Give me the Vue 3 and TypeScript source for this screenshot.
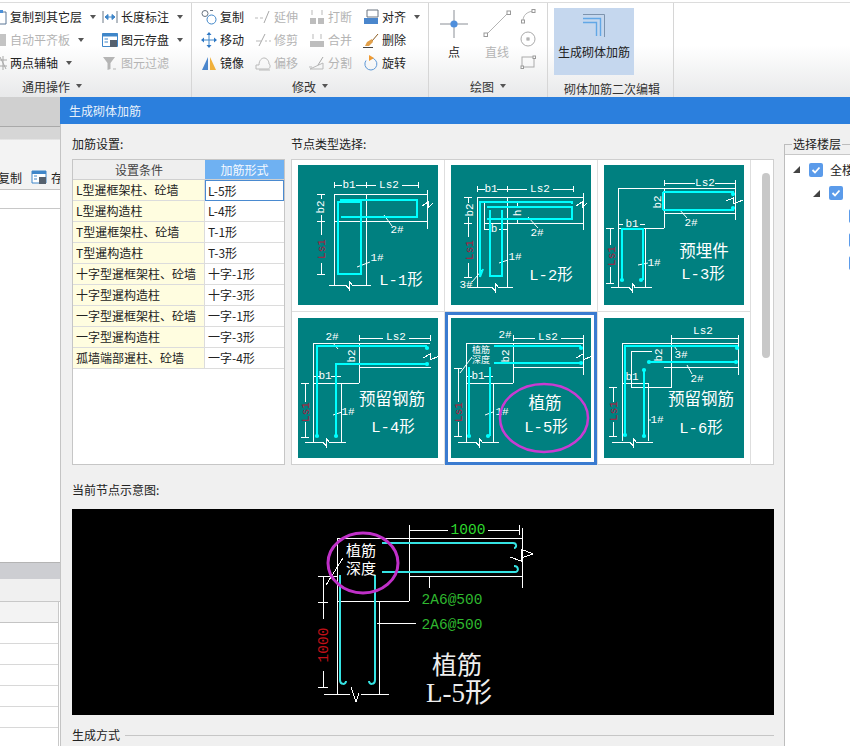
<template>
  <div class="page">
    <header class="ribbon">
      <section class="group g-common">
        <div class="tools">
          <div v-for="t in commonTools" :key="t.label" class="tool" :class="{ off: t.off }">
            <svg class="ico" viewBox="0 0 16 16"><path v-for="(p, i) in t.icon" :key="i" :d="p.d" :fill="p.f || 'none'" :stroke="p.s || 'none'" /></svg>
            <span>{{ t.label }}</span>
            <i v-if="t.caret" class="caret"></i>
          </div>
        </div>
        <footer class="group-label">通用操作<i class="caret"></i></footer>
      </section>

      <section class="group g-modify">
        <div class="tools">
          <div v-for="t in modifyTools" :key="t.label" class="tool" :class="{ off: t.off }">
            <svg class="ico" viewBox="0 0 16 16"><path v-for="(p, i) in t.icon" :key="i" :d="p.d" :fill="p.f || 'none'" :stroke="p.s || 'none'" /></svg>
            <span>{{ t.label }}</span>
            <i v-if="t.caret" class="caret"></i>
          </div>
        </div>
        <footer class="group-label">修改<i class="caret"></i></footer>
      </section>

      <section class="group g-draw">
        <div class="draw-tools">
          <div class="big-tool point">
            <svg width="30" height="30" viewBox="0 0 30 30">
              <path d="M15 1V29M1 15H29" stroke="#8a8f96" fill="none" />
              <circle cx="15" cy="15" r="3.6" fill="#4f8fdc" />
            </svg>
            <span>点</span>
          </div>
          <div class="big-tool line off">
            <svg width="30" height="30" viewBox="0 0 30 30">
              <path d="M4 26L26 4" stroke="#b4b4b4" fill="none" />
              <rect x="2" y="24" width="3.5" height="3.5" fill="#fff" stroke="#999" />
              <rect x="25" y="2" width="3.5" height="3.5" fill="#fff" stroke="#999" />
            </svg>
            <span>直线</span>
          </div>
          <div class="mini-tools">
            <svg width="16" height="16" viewBox="0 0 16 16"><path d="M3 13C3 7 7 4 13 3" stroke="#b4b4b4" fill="none" /><rect x="1.5" y="12" width="3" height="3" fill="#fff" stroke="#999" /><rect x="12" y="1.5" width="3" height="3" fill="#fff" stroke="#999" /></svg>
            <svg width="16" height="16" viewBox="0 0 16 16"><circle cx="8" cy="8" r="7" stroke="#aaa" fill="#fff" /><rect x="7" y="7" width="2" height="2" fill="none" stroke="#999" /></svg>
            <svg width="16" height="16" viewBox="0 0 16 16"><rect x="2" y="3" width="12" height="10" stroke="#aaa" fill="none" /><rect x="1" y="12" width="2.5" height="2.5" fill="#fff" stroke="#999" /><rect x="13" y="2" width="2.5" height="2.5" fill="#fff" stroke="#999" /></svg>
          </div>
        </div>
        <footer class="group-label">绘图<i class="caret"></i></footer>
      </section>

      <section class="group g-rebar">
        <div class="rebar-tile">
          <svg width="24" height="24" viewBox="0 0 24 24">
            <path d="M1 1.5H22.5V24" stroke="#7d93ad" fill="none" />
            <path d="M1 5.5H18.5V23" stroke="#62a7e6" stroke-width="1.4" fill="none" />
            <path d="M1 9.5H14.5V23" stroke="#62a7e6" stroke-width="1.4" fill="none" />
          </svg>
          <span>生成砌体加筋</span>
        </div>
        <footer class="group-label">砌体加筋二次编辑</footer>
      </section>
    </header>

    <div class="backdrop">
      <div class="back-top"></div>
      <div class="back-bar">
        <div class="back-tools">
          <span class="back-copy">复制</span>
          <svg class="ico" viewBox="0 0 16 16">
            <path d="M1 2H15V14H1Z" fill="#fff" stroke="#3f86c9" />
            <path d="M1 2H15V5H1Z" fill="#3f86c9" />
            <path d="M8 8H15V15H8Z" fill="#56616e" />
            <path d="M3 7H6M3 10H6" stroke="#3f86c9" />
          </svg>
          <span>存</span>
        </div>
      </div>
      <div class="back-blank"></div>
      <div class="back-white"></div>
      <div class="back-band"></div>
      <div class="back-strip"></div>
      <div class="back-grid">
        <div class="back-head"></div>
        <div v-for="n in 6" :key="n" class="back-row"></div>
      </div>
    </div>

    <div class="dialog">
      <div class="dialog-title">生成砌体加筋</div>
      <div class="dialog-body">
        <div class="main-col">
          <div class="top-row">
            <div class="settings">
              <div class="caption">加筋设置:</div>
              <div class="table">
                <div class="th">设置条件</div>
                <div class="th th-active">加筋形式</div>
                <template v-for="(r, i) in rows" :key="r.name">
                  <div class="td td-name">{{ r.name }}</div>
                  <div class="td td-form" :class="{ current: i === 0 }">{{ r.form }}</div>
                </template>
              </div>
            </div>

            <div class="nodes">
              <div class="caption">节点类型选择:</div>
              <div class="node-panel">
                <div class="node-grid">
                  <div v-for="(n, i) in nodes" :key="n.id" class="node-cell" :class="{ selected: n.id === 'L-5', first: i < 3 }">
                    <svg class="node-img" width="140" height="140" viewBox="0 0 140 140">
                      <path :d="n.white" class="wire" />
                      <path :d="n.leaders" class="leader" />
                      <path :d="n.cyan" class="bar" />
                      <circle v-for="(d, k) in n.dots" :key="k" :cx="d[0]" :cy="d[1]" r="2.1" fill="#00ffff" />
                      <text
                        v-for="(l, k) in n.labels"
                        :key="k"
                        :x="l.x"
                        :y="l.y"
                        :class="['lbl', l.kind || 'dim']"
                        :transform="l.rot ? `rotate(-90 ${l.x} ${l.y})` : undefined"
                      >{{ l.t }}</text>
                      <ellipse v-if="n.id === 'L-5'" cx="93" cy="100" rx="44" ry="34" class="mark" />
                    </svg>
                  </div>
                </div>
                <div class="scroll-thumb"></div>
              </div>
            </div>
          </div>

          <div class="caption preview-cap">当前节点示意图:</div>
          <svg class="preview" width="702" height="206" viewBox="0 0 702 206">
            <path class="p-wire" d="M337 16V26M337 21H376M416 21H447M447 16V26M265 29H450M265 29V185M337 18V92M265 92H337M337 67H450M450 19V79M307 92V185M252 185H278M289 185H317M357 67V79M305 114H344M438 48L449 52L449 40L461 45L449 49M279 178L284 193L287 184" />
            <path class="p-wire" d="M251 67V110M251 162V178M246 67H265M246 93H256M246 178H256M271 49L254 76" />
            <path class="p-bar" d="M310 34H441C445 34 445 39 442 39M310 63H443C447 63 447 57 442 57M268 66V171C268 176 274 176 274 172M303 66V171C303 176 297 176 297 172" />
            <text x="396" y="21" class="p-num lime">1000</text>
            <text x="380" y="91" class="p-code green">2A6@500</text>
            <text x="380" y="116" class="p-code green">2A6@500</text>
            <text x="252" y="136" class="p-num red" transform="rotate(-90 252 136)">1000</text>
            <text x="289" y="40" class="p-note">植筋</text>
            <text x="289" y="58" class="p-note">深度</text>
            <text x="385" y="156" class="p-title">植筋</text>
            <text x="387" y="184" class="p-title p-code-name">L-5形</text>
            <ellipse cx="291" cy="54" rx="35" ry="30" class="p-mark" />
          </svg>
          <div class="gen-row"><span>生成方式</span><i></i></div>
        </div>

        <fieldset class="floors">
          <legend>选择楼层</legend>
          <div class="tree">
            <div class="tree-row">
              <svg class="arrow" width="7" height="7" viewBox="0 0 7 7"><path d="M7 0V7H0Z" fill="#444" /></svg>
              <span class="check"><svg width="14" height="14" viewBox="0 0 14 14"><path d="M3.5 7L6 9.5L10.5 4.5" stroke="#fff" stroke-width="1.8" fill="none" /></svg></span>
              <span class="tree-text">全楼</span>
            </div>
            <div class="tree-row lvl2">
              <svg class="arrow" width="7" height="7" viewBox="0 0 7 7"><path d="M7 0V7H0Z" fill="#444" /></svg>
              <span class="check"><svg width="14" height="14" viewBox="0 0 14 14"><path d="M3.5 7L6 9.5L10.5 4.5" stroke="#fff" stroke-width="1.8" fill="none" /></svg></span>
            </div>
            <div v-for="n in 3" :key="n" class="tree-row lvl3"><span class="check"></span></div>
          </div>
        </fieldset>
      </div>
    </div>
  </div>
</template>

<script setup lang="ts">
interface Shape {
  d: string
  s?: string
  f?: string
}

interface Tool {
  label: string
  icon: Shape[]
  off?: boolean
  caret?: boolean
}

interface Label {
  x: number
  y: number
  t: string
  rot?: boolean
  kind?: string
}

interface NodeImg {
  id: string
  white: string
  leaders: string
  cyan: string
  dots: number[][]
  labels: Label[]
}

const grey = '#b9b9b9'

const commonTools: Tool[] = [
  { label: '复制到其它层', caret: true, icon: [{ d: 'M4 3H15V15H4Z', s: '#5a7696', f: '#fff' }, { d: 'M2 1H12V4H2Z', f: '#4a8fd8' }] },
  { label: '自动平齐板', off: true, caret: true, icon: [{ d: 'M9 2H15V14H9Z', f: '#c4c4c4' }] },
  { label: '两点辅轴', caret: true, icon: [{ d: 'M12 1V15M8 5H16M8 11H16M9 2L15 14', s: '#a8a8a8' }] },
  { label: '长度标注', caret: true, icon: [{ d: 'M1 2V14M15 2V14', s: '#6d7a88' }, { d: 'M3 8H13M3 8L6 5.5V10.5ZM13 8L10 5.5V10.5Z', s: '#3f86c9', f: '#3f86c9' }] },
  { label: '图元存盘', caret: true, icon: [{ d: 'M0.5 1.5H15.5V14.5H0.5Z', f: '#fff', s: '#3f86c9' }, { d: 'M0.5 1.5H15.5V4.5H0.5Z', f: '#3f86c9' }, { d: 'M8 8H15V15H8Z', f: '#56616e' }, { d: 'M2.5 7H6M2.5 10H6', s: '#3f86c9' }] },
  { label: '图元过滤', off: true, icon: [{ d: 'M1 2H13L8.5 8V14L5.5 15V8Z', f: '#b5b5b5' }, { d: 'M11 14H14', s: '#b5b5b5' }] }
]

const modifyTools: Tool[] = [
  { label: '复制', icon: [{ d: 'M7 4.5A3 3 0 1 1 1 4.5A3 3 0 1 1 7 4.5', s: '#6a7480' }, { d: 'M15 10.5A4.5 4.5 0 1 1 6 10.5A4.5 4.5 0 1 1 15 10.5', s: '#3f86c9' }, { d: 'M9 1.5H12', s: '#6a7480' }] },
  { label: '移动', icon: [{ d: 'M8 2V14M2 8H14', s: '#3f86c9' }, { d: 'M8 0L10.5 3H5.5ZM8 16L5.5 13H10.5ZM0 8L3 5.5V10.5ZM16 8L13 10.5V5.5Z', f: '#2f78c4' }] },
  { label: '镜像', icon: [{ d: 'M7 2V15H1Z', f: '#4a86cc' }, { d: 'M9 2V15H15Z', f: '#f0b03a' }] },
  { label: '延伸', off: true, icon: [{ d: 'M0 9H3M5 9H8', s: grey }, { d: 'M14 2L9 14', s: '#a8a8a8' }] },
  { label: '修剪', off: true, icon: [{ d: 'M1 9H6M10 9H12M14 9H16', s: grey }, { d: 'M10 2L4 14', s: '#a8a8a8' }] },
  { label: '偏移', off: true, icon: [{ d: 'M1 14V10H4C4 5 7 3 9 3C12 3 14 6 14 9C16 10 15 14 13 14Z', s: grey }, { d: 'M4 15H15', s: grey }] },
  { label: '打断', off: true, icon: [{ d: 'M1 9H7V15H1ZM9 9H15V15H9Z', f: '#bdbdbd' }, { d: 'M3 1V6M13 1V6', s: grey }] },
  { label: '合并', off: true, icon: [{ d: 'M1 9H15V15H1Z', f: '#bdbdbd' }, { d: 'M4 2V7M12 2V7', s: grey }] },
  { label: '分割', off: true, icon: [{ d: 'M1 14H14V8L1 14Z', s: grey }, { d: 'M9 10L14 2', s: '#a8a8a8' }, { d: 'M0 12H3', s: grey }] },
  { label: '对齐', caret: true, icon: [{ d: 'M4 1H15V8H4Z', s: '#6a7480', f: '#fff' }, { d: 'M1 9H15V15H1Z', f: '#4a86cc' }] },
  { label: '删除', icon: [{ d: 'M9 9L15 2', s: '#8a5a20' }, { d: 'M4 10L9 7L10 10L6 14H2Z', f: '#e2a04a' }, { d: 'M0 15.5H10', s: '#444' }] },
  { label: '旋转', icon: [{ d: 'M8 3A6 6 0 1 1 3 5.5', s: '#5d97d6' }, { d: 'M6 0L11 3L6 6Z', f: '#ef9a32' }] }
]

const rows = [
  { name: 'L型暹框架柱、砼墙', form: 'L-5形' },
  { name: 'L型暹构造柱', form: 'L-4形' },
  { name: 'T型暹框架柱、砼墙', form: 'T-1形' },
  { name: 'T型暹构造柱', form: 'T-3形' },
  { name: '十字型暹框架柱、砼墙', form: '十字-1形' },
  { name: '十字型暹构造柱', form: '十字-3形' },
  { name: '一字型暹框架柱、砼墙', form: '一字-1形' },
  { name: '一字型暹构造柱', form: '一字-3形' },
  { name: '孤墙端部暹柱、砼墙', form: '一字-4形' }
]

const nodes: NodeImg[] = [
  {
    id: 'L-1',
    white: 'M36 17V23M36 20H44M58 20H78M104 20H120M120 17V23M68 17V23M36 29H129M36 56H129M36 29V120M68 29V120M129 25V64M31 120H48M54 120H73M48 120L51 124L51 116L54 120M124 41L130 37V43L135 38M23 29V34M23 50V70M23 98V109M19 29H27M19 56H27M19 109H27',
    leaders: 'M86 50L94 61M59 102L72 97',
    cyan: 'M42 35H119V52H43M40 37H63V109H40Z',
    dots: [],
    labels: [
      { x: 51, y: 20, t: 'b1' }, { x: 91, y: 20, t: 'Ls2' },
      { x: 23, y: 42, t: 'b2', rot: true }, { x: 24, y: 84, t: 'Ls1', rot: true, kind: 'red' },
      { x: 99, y: 65, t: '2#' }, { x: 79, y: 93, t: '1#' }, { x: 103, y: 116, t: 'L-1形', kind: 'big' }
    ]
  },
  {
    id: 'L-2',
    white: 'M26 21V27M26 24H34M46 24H76M102 24H122M122 21V27M56 21V27M26 32H132M33 58H132M26 32V122M56 32V122M33 37V64M33 37H56M132 28V65M17 122H41M47 122H62M41 122L44 126L44 118L47 122M125 41L131 37V43L136 38M17 32V38M17 52V72M17 98V112M13 32H21M13 58H21M13 112H21M33 64H38M48 64H56M66 37V43M66 53V58M63 37H69M63 58H69',
    leaders: 'M77 52L87 63M48 98L57 95M32 104L21 117',
    cyan: 'M29 112V37H121V39M36 42H121V54H36M39 45V111H51V45M29 112L32 104',
    dots: [],
    labels: [
      { x: 40, y: 24, t: 'b1' }, { x: 89, y: 24, t: 'Ls2' },
      { x: 19, y: 45, t: 'b2', rot: true }, { x: 19, y: 85, t: 'Ls1', rot: true, kind: 'red' },
      { x: 43, y: 64, t: 'b' }, { x: 67, y: 48, t: 'h', rot: true },
      { x: 86, y: 68, t: '2#' }, { x: 64, y: 92, t: '1#' }, { x: 15, y: 120, t: '3#' },
      { x: 100, y: 111, t: 'L-2形', kind: 'big' }
    ]
  },
  {
    id: 'L-3',
    white: 'M60 15V21M60 18H91M111 18H131M131 15V21M14 23H132M14 23V63M14 63H60M60 23V63M60 48H131M131 17V55M14 59H19M36 59H41M14 63V122M41 63V122M6 63V80M6 102V118M2 63H10M2 118H10M7 122H25M30 122H48M25 122L28 126L28 118L31 122M122 36L129 33V39L139 35',
    leaders: 'M75 44L83 53M34 100L44 98',
    cyan: 'M59 27H129V31M59 45H129V42M59 27V45M18 115V64H39V115',
    dots: [[129, 29], [129, 43], [18, 115], [37, 115]],
    labels: [
      { x: 101, y: 18, t: 'Ls2' }, { x: 28, y: 59, t: 'b1' }, { x: 54, y: 37, t: 'b2', rot: true },
      { x: 8, y: 91, t: 'Ls1', rot: true, kind: 'red' }, { x: 87, y: 58, t: '2#' }, { x: 50, y: 98, t: '1#' },
      { x: 100, y: 87, t: '预埋件', kind: 'cn' }, { x: 99, y: 110, t: 'L-3形', kind: 'big' }
    ]
  },
  {
    id: 'L-4',
    white: 'M61 17V23M61 20H85M111 20H132M132 17V23M15 25H132M15 25V124M61 49H133M61 25V65M15 65H61M43 65V124M7 124H25M31 124H48M25 124L28 128L28 120L31 124M15 58H22M33 58H43M7 65V84M7 104V119M3 65H11M3 119H11M125 40L132 36V42L141 38',
    leaders: 'M35 25L40 31M35 97L44 94',
    cyan: 'M19 118V28H129M38 118V46H129',
    dots: [[129, 30], [129, 46], [19, 118], [38, 118]],
    labels: [
      { x: 98, y: 19, t: 'Ls2' }, { x: 34, y: 19, t: '2#' }, { x: 54, y: 38, t: 'b2', rot: true }, { x: 27, y: 58, t: 'b1' },
      { x: 8, y: 94, t: 'Ls1', rot: true, kind: 'red' }, { x: 50, y: 94, t: '1#' },
      { x: 94, y: 82, t: '预留钢筋', kind: 'cn' }, { x: 95, y: 110, t: 'L-4形', kind: 'big' }
    ]
  },
  {
    id: 'L-5',
    white: 'M62 17V23M62 20H84M110 20H132M132 17V23M15 25H132M15 25V124M62 49H132M62 25V65M15 65H62M42 65V124M132 23V57M7 124H25M31 124H48M25 124L28 128L28 120L31 124M15 58H21M33 58H42M7 50V84M7 104V118M3 50H11M3 118H11M125 40L132 36V42L141 38',
    leaders: 'M21 39L9 55M34 97L42 94',
    cyan: 'M18 118V49M39 118V49M43 28H130M43 45H130',
    dots: [[130, 30], [130, 45], [18, 118], [37, 118]],
    labels: [
      { x: 97, y: 19, t: 'Ls2' }, { x: 54, y: 17, t: '2#' }, { x: 55, y: 38, t: 'b2', rot: true }, { x: 27, y: 58, t: 'b1' },
      { x: 30, y: 33, t: '植筋', kind: 'note' }, { x: 30, y: 43, t: '深度', kind: 'note' },
      { x: 8, y: 94, t: 'Ls1', rot: true, kind: 'red' }, { x: 51, y: 94, t: '1#' },
      { x: 94, y: 86, t: '植筋', kind: 'cn' }, { x: 95, y: 110, t: 'L-5形', kind: 'big' }
    ]
  },
  {
    id: 'L-6',
    white: 'M67 17V23M67 20H134M134 17V23M18 25H134M18 25V123M48 33H27V69H67V20M60 49H134M134 20V57M44 65V123M18 65H44M9 69V84M9 104V118M5 69H13M5 118H13M8 124H26M32 124H49M26 124L29 128L29 120L32 124',
    leaders: 'M83 47L88 56M70 28L73 32M44 102L47 102',
    cyan: 'M21 117V28H133V30M45 44H132M40 52V118',
    dots: [[21, 117], [40, 118], [133, 30], [132, 44], [45, 44], [40, 52]],
    labels: [
      { x: 99, y: 13, t: 'Ls2' }, { x: 55, y: 37, t: 'b2', rot: true }, { x: 77, y: 37, t: '3#' }, { x: 93, y: 61, t: '2#' },
      { x: 28, y: 59, t: 'b1' }, { x: 10, y: 93, t: 'Ls1', rot: true, kind: 'red' }, { x: 53, y: 102, t: '1#' },
      { x: 97, y: 82, t: '预留钢筋', kind: 'cn' }, { x: 97, y: 111, t: 'L-6形', kind: 'big' }
    ]
  }
]
</script>

<style>
html,
body {
  margin: 0;
  overflow: hidden;
  background: #fff;
}
</style>

<style scoped>
.page {
  position: relative;
  width: 850px;
  height: 746px;
  overflow: hidden;
  background: #fff;
  font-family: "Noto Sans CJK SC", "Liberation Sans", sans-serif;
  font-size: 12px;
  color: #222;
}

/* ribbon */
.ribbon {
  display: flex;
  height: 94px;
  margin-top: 2px;
  border-top: 1px solid #dcdcdc;
  background: linear-gradient(#fff 0, #fff 45%, #e8e9ea 100%);
  overflow: hidden;
}

.group {
  flex: none;
  position: relative;
  border-right: 1px solid #d6d6d6;
  box-sizing: border-box;
}

.g-common { width: 192px; }
.g-modify { width: 237px; }
.g-draw { width: 119px; }
.g-rebar { width: 126px; }

.tools {
  display: grid;
  grid-auto-flow: column;
  grid-template-rows: repeat(3, 23px);
  margin-top: 2px;
}

.g-common .tools {
  grid-template-columns: 111px auto;
  margin-left: -9px;
}

.g-modify .tools {
  grid-template-columns: 54px 54px 54px auto;
  margin-left: 9px;
}

.tool {
  display: flex;
  align-items: center;
  gap: 3px;
  white-space: nowrap;
}

.ico {
  flex: none;
  width: 16px;
  height: 16px;
}

.off {
  color: #b4b4b4;
}

.caret {
  display: inline-block;
  width: 0;
  height: 0;
  margin-left: 5px;
  border: 3px solid transparent;
  border-top: 4px solid #555;
  border-bottom: 0;
}

.group-label {
  display: flex;
  align-items: center;
  justify-content: center;
  height: 16px;
  margin-top: 4px;
  color: #333;
}

.g-common .group-label {
  justify-content: flex-start;
  padding-left: 22px;
}

.group-label .caret {
  margin-left: 6px;
}

.draw-tools {
  display: flex;
  height: 69px;
  margin-top: 3px;
}

.draw-tools + .group-label {
  margin-top: 3px;
}

.big-tool {
  display: flex;
  flex-direction: column;
  align-items: center;
  padding-top: 3px;
  gap: 5px;
}

.big-tool span {
  line-height: 16px;
}

.point { width: 50px; }
.line { width: 36px; margin-right: 5px; }

.mini-tools {
  display: flex;
  flex-direction: column;
  gap: 7px;
  padding-top: 2px;
}

.rebar-tile {
  display: flex;
  flex-direction: column;
  align-items: center;
  box-sizing: border-box;
  width: 80px;
  height: 67px;
  margin: 5px 0 0 6px;
  padding-top: 5px;
  background: #c5d7ee;
  gap: 7px;
}

.rebar-tile span {
  line-height: 16px;
}

.g-rebar .group-label {
  margin-top: 4px;
  padding-left: 3px;
  transform: translateY(1px);
}

/* window behind the dialog */
.back-top {
  height: 29px;
  background: #d0d0d0;
  border-bottom: 1px solid #a9a9a9;
}

.back-bar {
  height: 63px;
  box-sizing: border-box;
  padding-top: 42px;
  background: linear-gradient(#d6d6d6 0, #d6d6d6 12px, #f3f3f3 13px);
  border-bottom: 1px solid #c4c4c4;
}

.back-tools {
  display: flex;
  align-items: center;
  gap: 4px;
  height: 16px;
  margin-left: -2px;
}

.back-copy {
  margin-right: 5px;
}

.back-blank {
  height: 18px;
  border-bottom: 1px solid #c8c8c8;
}

.back-white {
  height: 353px;
  border-bottom: 1px solid #b4b4b4;
}

.back-band {
  height: 16px;
  background: #cdced2;
}

.back-strip {
  height: 22px;
  background: #f0f0f0;
  border-bottom: 1px solid #c8c8c8;
}

.back-grid {
  width: 58px;
  border-right: 1px solid #c8c8c8;
}

.back-head {
  height: 20px;
  background: #f3f3f3;
  border-bottom: 1px solid #c4c4c4;
}

.back-row {
  height: 20px;
  border-bottom: 1px solid #d8d8d8;
}

/* dialog */
.dialog {
  position: absolute;
  left: 60px;
  top: 97px;
  width: 790px;
  height: 649px;
  background: #f0f0f0;
  overflow: hidden;
}

.dialog-title {
  height: 27px;
  line-height: 27px;
  padding-left: 9px;
  background: #2b7fdd;
  color: #e8f1fb;
}

.dialog-body {
  display: flex;
  height: 622px;
  box-sizing: border-box;
  padding: 12px 0 0 11px;
  border-left: 1px solid #c4c4c4;
}

.main-col {
  flex: none;
  width: 702px;
}

.caption {
  height: 16px;
  line-height: 16px;
}

.top-row {
  display: flex;
  gap: 6px;
}

.settings {
  width: 213px;
}

.table {
  display: grid;
  grid-template-columns: 132px 1fr;
  grid-template-rows: 20px;
  grid-auto-rows: 21px;
  align-content: start;
  box-sizing: border-box;
  height: 306px;
  margin-top: 7px;
  background: #fff;
  border: 1px solid #c6c6c6;
}

.th {
  box-sizing: border-box;
  line-height: 19px;
  text-align: center;
  background: #efefef;
  color: #444;
  border-bottom: 1px solid #d0d0d0;
}

.th-active {
  background: #6fb1f2;
  color: #f4f9ff;
}

.td {
  box-sizing: border-box;
  line-height: 20px;
  padding-left: 3px;
  white-space: nowrap;
  overflow: hidden;
  border-bottom: 1px solid #dcdcdc;
}

.td-name {
  background: #fffde0;
  border-right: 1px solid #dcdcdc;
}

.td-form {
  background: #fff;
  padding-left: 3px;
}

.current {
  border: 1px solid #4a8ad0;
  line-height: 19px;
  padding-left: 2px;
}

.nodes {
  width: 483px;
}

.node-panel {
  position: relative;
  box-sizing: border-box;
  height: 306px;
  margin-top: 7px;
  background: #fff;
  border: 1px solid #cfcfcf;
}

.node-grid {
  display: grid;
  grid-template-columns: repeat(3, 153px);
}

.node-cell {
  box-sizing: border-box;
  height: 153px;
  padding: 6px;
  border-right: 1px solid #dedede;
}

.node-cell.first {
  height: 152px;
  padding-top: 5px;
  border-bottom: 1px solid #dedede;
}

.node-cell.selected {
  box-shadow: inset 0 0 0 3px #3a7bd0;
}

.node-img {
  display: block;
  background: #008080;
}

.wire,
.leader {
  fill: none;
  stroke: #fff;
  stroke-width: 1;
}

.wire {
  shape-rendering: crispEdges;
}

.bar {
  fill: none;
  stroke: #00ffff;
  stroke-width: 2;
}

.lbl {
  fill: #fff;
  text-anchor: middle;
  dominant-baseline: central;
  font-family: "Liberation Mono", "Noto Sans CJK SC", monospace;
  font-size: 11px;
}

.lbl.red {
  fill: #b0173c;
}

.lbl.note {
  font-size: 9px;
}

.lbl.big {
  font-size: 15.5px;
}

.lbl.cn {
  font-size: 16.5px;
}

.mark {
  fill: none;
  stroke: #c93bd2;
  stroke-width: 2.5;
}

.scroll-thumb {
  position: absolute;
  top: 13px;
  right: 3px;
  width: 8px;
  height: 185px;
  border-radius: 4px;
  background: #c8c8c8;
}

.preview-cap {
  margin-top: 17px;
}

.preview {
  display: block;
  margin-top: 11px;
  background: #000;
}

.p-wire {
  fill: none;
  stroke: #fff;
  stroke-width: 1;
  shape-rendering: crispEdges;
}

.p-bar {
  fill: none;
  stroke: #35e3e3;
  stroke-width: 2;
}

.preview text {
  text-anchor: middle;
  dominant-baseline: central;
}

.p-num,
.p-code {
  font-family: "Liberation Mono", monospace;
  font-size: 14.5px;
}

.lime {
  fill: #2ed82e;
}

.green {
  fill: #2fb82f;
}

.red {
  fill: #c01018;
}

.p-note {
  fill: #fff;
  font-size: 15px;
}

.p-title {
  fill: #eee;
  font-family: "Liberation Serif", "Noto Sans CJK SC", serif;
  font-size: 25px;
}

.p-code-name {
  font-size: 27px;
}

.p-mark {
  fill: none;
  stroke: #c030c8;
  stroke-width: 3;
}

.gen-row {
  display: flex;
  align-items: center;
  gap: 5px;
  height: 16px;
  margin-top: 11px;
}

.gen-row i {
  flex: 1;
  height: 1px;
  margin-top: 2px;
  background: #c6c6c6;
}

/* floor picker */
.floors {
  flex: none;
  box-sizing: border-box;
  width: 90px;
  height: 620px;
  margin: 0 0 0 10px;
  padding: 0;
  border: 1px solid #bdbdbd;
  border-right: 0;
  min-width: 0;
}

.floors legend {
  margin-left: 7px;
  padding: 0 1px;
  line-height: 16px;
  color: #222;
}

.tree {
  height: 600px;
  margin-top: 2px;
  padding-top: 3px;
  background: #fff;
  border-top: 1px solid #c8c8c8;
}

.tree-row {
  display: flex;
  align-items: center;
  height: 23.4px;
  padding-left: 8px;
  gap: 9px;
  white-space: nowrap;
}

.lvl2 { padding-left: 28px; }
.lvl3 { padding-left: 64px; }

.arrow {
  flex: none;
}

.check {
  flex: none;
  width: 14px;
  height: 14px;
  border-radius: 2px;
  background: #5b9bea;
}

.check svg {
  display: block;
}

.tree-text {
  margin-left: -2px;
  white-space: nowrap;
}
</style>
